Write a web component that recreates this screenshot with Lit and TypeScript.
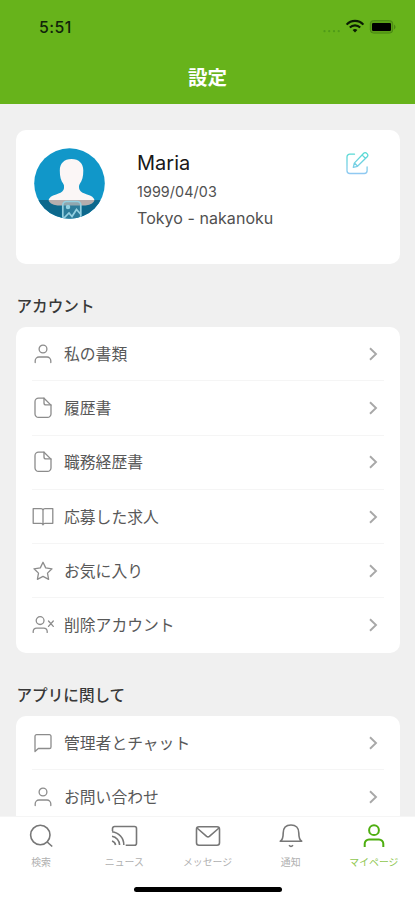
import { LitElement, html, svg, css } from "lit";
import { customElement, property } from "lit/decorators.js";

// List icons: 24x24 box, stroked with currentColor
const icons: Record<string, unknown> = {
  user: svg`<circle cx="12" cy="7" r="3.9"/><path d="M4.200 20.500v-1.700a3.800 3.800 0 0 1 3.800-3.800h8a3.800 3.800 0 0 1 3.800 3.800v1.700"/>`,
  file: svg`<path d="M13 2.200H7.500A3.500 3.500 0 0 0 4 5.700v12.200a3.500 3.500 0 0 0 3.500 3.500h9a3.500 3.500 0 0 0 3.500-3.500V9.100z"/><path d="M13 2.200v4.700a2 2 0 0 0 2 2h5"/>`,
  book: svg`<path d="M12 5.300a2 2 0 0 0-2-1.700H2.200v14.700H10a2 2 0 0 1 2 1.500 2 2 0 0 1 2-1.500h7.800V3.600H14a2 2 0 0 0-2 1.700zM12 5.300v14.500"/>`,
  star: svg`<path d="M12 3.300l2.700 5.600 6.300.9-4.500 4.300 1.100 6.200L12 17.400l-5.600 2.900 1.100-6.200L3 9.800l6.300-.9z"/>`,
  userx: svg`<circle cx="9.100" cy="7.600" r="3.900"/><path d="M2.200 19.400v-1a3.500 3.500 0 0 1 3.500-3.300h7a3.500 3.500 0 0 1 3.500 3.300v1"/><path d="M17.500 8l4.800 5.400M22.300 8l-4.800 5.400"/>`,
  chat: svg`<path d="M4 20.500V5.300a1.600 1.600 0 0 1 1.600-1.600h12.800A1.600 1.600 0 0 1 20 5.300v10.600a1.600 1.600 0 0 1-1.600 1.600H7.300z"/>`,
};

// Tab icons: 28x26 box
const tabIcons: Record<string, unknown> = {
  search: svg`<circle cx="13.300" cy="12" r="9.700"/><path d="M20.200 19l5 4.500"/>`,
  cast: svg`<path d="M2.500 8V5.500a2 2 0 0 1 2-2h20a2 2 0 0 1 2 2v14.800a2 2 0 0 1-2 2h-8.800"/><path d="M2 8.800a13 13 0 0 1 11.800 13.200M2 13.300a9 9 0 0 1 7.600 8.700M2 18a5 5 0 0 1 3.600 4"/>`,
  mail: svg`<rect x="2.500" y="3.800" width="23" height="18.500" rx="2.500"/><path d="M3 5l9.600 8.300a2.200 2.200 0 0 0 2.800 0L25 5"/>`,
  bell: svg`<path d="M3.300 18.300h21.400c-2.300-1.400-2.900-4-2.900-8.300 0-5-3-8-7.800-8s-7.800 3-7.800 8c0 4.300-.6 6.900-2.900 8.300z"/><path d="M12 22.300q2 2.200 4 0"/>`,
  me: svg`<circle cx="14" cy="7.200" r="4.900"/><path d="M4.700 24v-3.200a4.300 4.300 0 0 1 4.300-4.300h10a4.300 4.300 0 0 1 4.300 4.300V24"/>`,
};

@customElement("menu-list")
class MenuList extends LitElement {
  @property({ attribute: false }) items: string[][] = [];

  static styles = css`
    :host { display: block; background: #fff; border-radius: 10px; padding: 0 16px; }
    .row {
      height: 54.25px; box-sizing: border-box; display: flex; align-items: center;
      border-bottom: 1.5px solid #f5f5f5; color: #585858;
    }
    .row:last-child { border-bottom-color: transparent; }
    .icon {
      width: 24px; height: 24px; margin-left: -1px; margin-right: 9px; flex: none;
      fill: none; stroke: #8c8c8c; stroke-width: 1.3; stroke-linecap: round; stroke-linejoin: round;
    }
    .label { flex: 1; font-size: 15.8px; line-height: 24px; padding-top: 2px; white-space: nowrap; }
    .chevron { width: 10px; height: 14px; margin-right: 6px; fill: none; stroke: #a8a8a8; stroke-width: 1.9; }
  `;

  render() {
    return this.items.map(([icon, label]) => html`
      <div class="row">
        <svg class="icon" viewBox="0 0 24 24">${icons[icon]}</svg>
        <span class="label">${label}</span>
        <svg class="chevron" viewBox="0 0 10 14"><path d="M2 1.200L8 7l-6 5.800"/></svg>
      </div>`);
  }
}

@customElement("tab-bar")
class TabBar extends LitElement {
  static styles = css`
    :host { display: block; background: #fff; height: 84px; flex: none; border-top: 1px solid #f5f5f5; box-sizing: border-box; }
    .tabs { display: grid; grid-template-columns: repeat(5, 83.2px); justify-content: center; height: 70px; }
    .tab { display: flex; flex-direction: column; align-items: center; padding-top: 6px; color: #777; }
    .icon { width: 28px; height: 26px; fill: none; stroke: currentColor; stroke-width: 1.6; stroke-linejoin: round; }
    .label { font-size: 9.9px; line-height: 14px; margin-top: 6px; color: #b0b0b0; white-space: nowrap; }
    .active { color: #4eae10; }
    .active .icon { stroke-width: 2; }
    .active .label { color: #8fc750; }
    .home { width: 148px; height: 5px; border-radius: 3px; background: #000; margin: 0 auto; }
  `;

  render() {
    const tabs = [
      ["search", "検索"], ["cast", "ニュース"], ["mail", "メッセージ"], ["bell", "通知"], ["me", "マイページ"],
    ];
    return html`
      <div class="tabs">
        ${tabs.map(([icon, label]) => html`
          <div class="tab ${icon === "me" ? "active" : ""}">
            <svg class="icon" viewBox="0 0 28 26">${tabIcons[icon]}</svg>
            <span class="label">${label}</span>
          </div>`)}
      </div>
      <div class="home"></div>`;
  }
}

@customElement("app-root")
class AppRoot extends LitElement {
  static styles = css`
    :host {
      display: flex; flex-direction: column; height: 900px; overflow: hidden; background: #f0f0f0;
      font-family: Inter, "Noto Sans CJK JP", sans-serif;
    }
    .header { background: #67b31b; height: 104px; flex: none; }
    .status { display: flex; align-items: center; height: 54px; padding: 0 18px 0 39px; }
    .time { flex: 1; font-size: 15.8px; font-weight: 500; color: #10240a; letter-spacing: 0.5px; }
    .signals { width: 76px; height: 18px; }
    .title { text-align: center; color: #fff; font-size: 19.5px; font-weight: 700; line-height: 30px; margin-top: 9px; }
    .content { flex: 1; min-height: 0; overflow: hidden; padding: 26px 15.5px 0 16px; }
    .profile {
      background: #fff; border-radius: 10px; height: 134px; box-sizing: border-box;
      display: flex; padding: 18px 31px 0 18px;
    }
    .avatar { width: 71px; height: 71px; flex: none; margin-right: 32px; }
    .info { flex: 1; color: #505050; white-space: nowrap; }
    .name { font-size: 20px; line-height: 30px; color: #181818; }
    .date { font-size: 14.3px; line-height: 26px; margin-top: 1px; letter-spacing: 0.1px; }
    .place { font-size: 16px; line-height: 26px; letter-spacing: 0.05px; }
    .edit { width: 24px; height: 24px; margin-top: 2.5px; }
    .heading { font-size: 15.6px; line-height: 24px; font-weight: 500; color: #383838; padding-top: 2px; margin: 29px 0 8.2px 0.5px; }
  `;

  render() {
    return html`
      <div class="header">
        <div class="status">
          <span class="time">5:51</span>
          <svg class="signals" viewBox="0 0 76 18">
            <g fill="#4f9a18"><circle cx="3.500" cy="13.200" r="1.100"/><circle cx="8.200" cy="13.200" r="1.100"/><circle cx="13" cy="13.200" r="1.100"/><circle cx="17.700" cy="13.200" r="1.100"/></g>
            <g fill="none" stroke="#0a1c04" stroke-width="2.100"><path d="M25.600 6.600a11.400 11.400 0 0 1 16.800 0M28.800 9.600a7.200 7.200 0 0 1 10.400 0"/></g>
            <path d="M31.600 12a4 4 0 0 1 4.800 0L34 14.600z" fill="#0a1c04"/>
            <rect x="49.300" y="2.600" width="22.400" height="12.500" rx="3.200" fill="#5ba018" stroke="#4a8814"/>
            <rect x="51" y="4.900" width="19" height="8" rx="1.200" fill="#000"/>
            <path d="M73 6.500q3.200 2.500 0 5z" fill="#4a8814"/>
          </svg>
        </div>
        <div class="title">設定</div>
      </div>
      <div class="content">
        <div class="profile">
          <svg class="avatar" viewBox="0 0 71 71">
            <defs><clipPath id="disc"><circle cx="35.500" cy="35.500" r="35.300"/></clipPath></defs>
            <g clip-path="url(#disc)">
              <rect width="71" height="71" fill="#1197c9"/>
              <path d="M37.500 11C45 11 49.300 15.500 49.300 22.500c0 6-1 10-3.600 13.500-1 1.500-.8 4.500 0 6 1.200 2.200 4 3.400 7.300 4.400 4.500 1.400 7 3 7.600 5.800H14.500c.6-2.800 3.100-4.400 7.600-5.800 3.300-1 6.100-2.200 7.300-4.400.8-1.500 1-4.500 0-6-2.600-3.500-3.600-7.500-3.600-13.500C25.800 15.500 30 11 37.500 11z" fill="#fbf6f6"/>
              <rect y="52" width="71" height="19" fill="#0d688c"/>
              <path d="M14.500 52h46q-.5 4-9 5.600h-28Q15 56 14.500 52z" fill="#b5adad"/>
              <rect x="28.800" y="53.500" width="18" height="18" rx="3.500" fill="#5c9bb0" fill-opacity=".4"/>
              <g fill="none" stroke="#93cfe0" stroke-width="1.700">
                <rect x="28.800" y="53.500" width="18" height="18" rx="3.500"/>
                <circle cx="34" cy="59" r="1.400" fill="#93cfe0"/>
                <path d="M29.500 70.500l5.500-5.500 3 3.500 4.500-7 4 4.500"/>
              </g>
            </g>
          </svg>
          <div class="info">
            <div class="name">Maria</div>
            <div class="date">1999/04/03</div>
            <div class="place">Tokyo - nakanoku</div>
          </div>
          <svg class="edit" viewBox="0 0 24 24">
            <defs><linearGradient id="tint" x1="0" y1="0" x2="0" y2="24" gradientUnits="userSpaceOnUse">
              <stop offset="0" stop-color="#4fdccf"/><stop offset="1" stop-color="#94c8f4"/></linearGradient></defs>
            <g fill="none" stroke="url(#tint)" stroke-width="1.300" stroke-linecap="round" stroke-linejoin="round">
              <path d="M9.500 3.200H4.800a2.800 2.800 0 0 0-2.800 2.800v13.700a2.800 2.800 0 0 0 2.800 2.800h14.500a2.800 2.800 0 0 0 2.800-2.800V16"/>
              <path d="M8.300 16.400l1-4.300L18.700 2.300a2 2 0 0 1 2.900 0l.6.600a2 2 0 0 1 0 2.800L12.500 15.300zM17.200 4.100l3.200 3.200M9.500 12l2.900 3"/>
            </g>
          </svg>
        </div>
        <div class="heading">アカウント</div>
        <menu-list .items=${[
          ["user", "私の書類"], ["file", "履歴書"], ["file", "職務経歴書"],
          ["book", "応募した求人"], ["star", "お気に入り"], ["userx", "削除アカウント"],
        ]}></menu-list>
        <div class="heading">アプリに関して</div>
        <menu-list .items=${[["chat", "管理者とチャット"], ["user", "お問い合わせ"]]}></menu-list>
      </div>
      <tab-bar></tab-bar>`;
  }
}
